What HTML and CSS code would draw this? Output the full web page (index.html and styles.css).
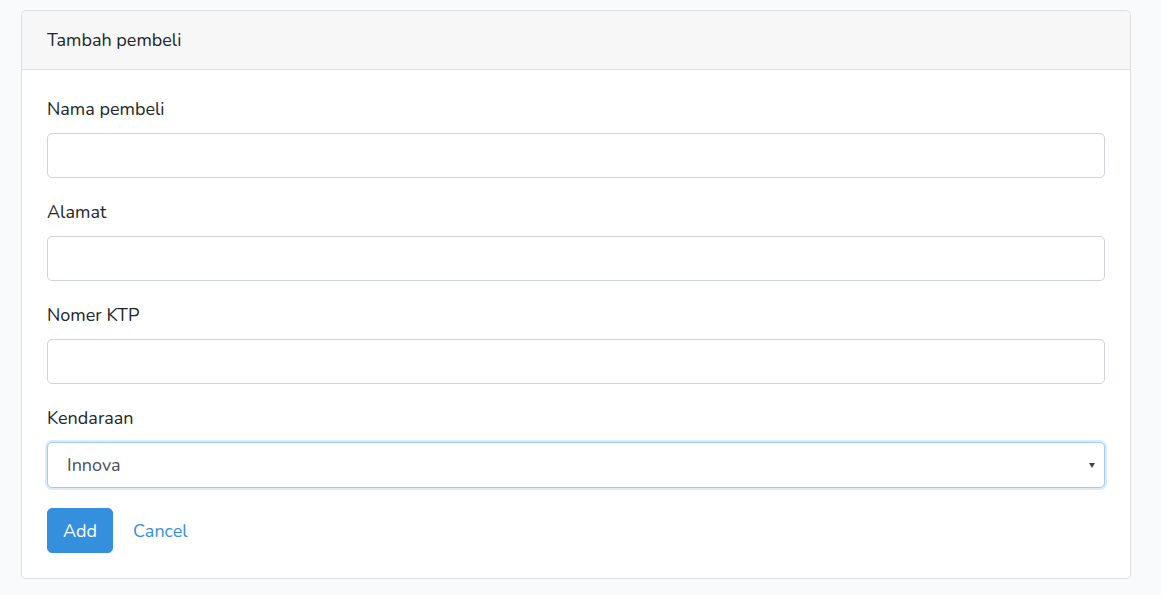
FILE: index.html
```html
<!DOCTYPE html>
<html>
<head>
<meta charset="utf-8">
<link rel="stylesheet" href="styles.css">
</head>
<body>
<div class="page">
  <div class="card">
    <div class="card-header">Tambah pembeli</div>
    <div class="card-body">
      <form>
        <div class="form-group">
          <label class="label">Nama pembeli</label>
          <input class="form-control" type="text">
        </div>
        <div class="form-group">
          <label class="label">Alamat</label>
          <input class="form-control" type="text">
        </div>
        <div class="form-group">
          <label class="label">Nomer KTP</label>
          <input class="form-control" type="text">
        </div>
        <div class="form-group">
          <label class="label">Kendaraan</label>
          <div class="select focused">
            <span class="select-value">Innova</span>
            <span class="caret"></span>
          </div>
        </div>
        <div class="actions">
          <button class="btn btn-primary" type="button">Add</button>
          <a class="btn btn-link" href="#">Cancel</a>
        </div>
      </form>
    </div>
  </div>
</div>
</body>
</html>
```

FILE: styles.css
```css
html, body {
  margin: 0;
  padding: 0;
  background: #f8fafc;
}
body {
  font-family: "Nunito", "Lato", "Open Sans", sans-serif;
  font-size: 18px;
  line-height: 28px;
  color: #212529;
}
.page {
  padding: 10px 30px 0 21px;
}
.card {
  width: 1108px;
  background: #fff;
  border: 1px solid #dfdfdf;
  border-radius: 5px;
}
.card-header {
  background: #f7f7f7;
  border-bottom: 1px solid #dfdfdf;
  padding: 15px 25px;
  border-radius: 5px 5px 0 0;
}
.card-body {
  padding: 25px;
}
form { margin: 0; }
.form-group {
  margin-bottom: 20px;
}
.label {
  display: block;
  margin-bottom: 10px;
}
.form-control {
  display: block;
  box-sizing: border-box;
  width: 100%;
  height: 45px;
  padding: 7.5px 15px;
  font: inherit;
  color: #495057;
  background: #fff;
  border: 1px solid #ced4da;
  border-radius: 5px;
  outline: none;
}
.select {
  box-sizing: border-box;
  height: 46px;
  padding: 7px 19px;
  display: flex;
  align-items: center;
  justify-content: space-between;
  border: 1px solid #ced4da;
  border-radius: 5px;
  color: #495057;
  background: #fff;
}
.select.focused {
  border-color: #a1cbef;
  box-shadow: 0 0 0 2px rgba(52, 144, 220, 0.18);
}
.caret {
  width: 0;
  height: 0;
  border-left: 3px solid transparent;
  border-right: 3px solid transparent;
  border-top: 5px solid #444;
  margin-right: -10px;
}
.actions {
  display: flex;
  align-items: center;
  gap: 4px;
}
.btn {
  box-sizing: border-box;
  height: 45px;
  padding: 7.5px 15px;
  font: inherit;
  border: 1px solid transparent;
  border-radius: 5px;
  line-height: 28px;
  text-decoration: none;
  display: inline-block;
}
.btn-primary {
  background: #3490dc;
  border-color: #3490dc;
  color: #fff;
}
.btn-link {
  color: #3490dc;
  background: transparent;
}
```
